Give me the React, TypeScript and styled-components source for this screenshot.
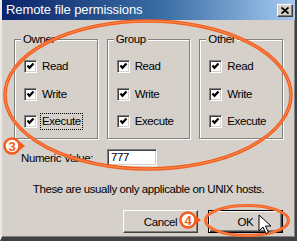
import styled, { createGlobalStyle } from 'styled-components';

const GlobalStyle = createGlobalStyle`
  html, body {
    margin: 0;
    padding: 0;
    background: #d6d0cb;
  }
  * {
    box-sizing: border-box;
  }
`;

const ORANGE = '#f35d1c';

const Window = styled.div`
  position: relative;
  width: 297px;
  height: 241px;
  display: flex;
  flex-direction: column;
  background: #d6d0cb;
  border-style: solid;
  border-width: 0 2px 4px 2px;
  border-color: #d6d0cb #404040 #404040 #ece9e4;
  box-shadow: inset -1px -1px 0 #808080;
  font-family: 'Liberation Sans', Arial, sans-serif;
  font-size: 11.5px;
  letter-spacing: -0.4px;
  color: #000;
`;

const TitleBar = styled.div`
  height: 20px;
  flex: none;
  display: flex;
  align-items: center;
  justify-content: space-between;
  padding: 0 2px 0 4px;
  background: linear-gradient(90deg, #0a246a 0%, #3a6ea5 55%, #a6caf0 100%);
`;

const Title = styled.span`
  color: #fff;
  font-size: 13px;
  letter-spacing: -0.1px;
  line-height: 20px;
`;

const CloseButton = styled.div`
  width: 16px;
  height: 13px;
  margin-top: 1px;
  display: flex;
  align-items: center;
  justify-content: center;
  background: #d6d0cb;
  border: 1px solid;
  border-color: #fff #404040 #404040 #fff;
  box-shadow: inset -1px -1px 0 #808080;
`;

const Body = styled.div`
  flex: 1;
  display: flex;
  flex-direction: column;
  padding: 19px 12px 0 12px;
`;

const GroupsRow = styled.div`
  display: flex;
  gap: 9px;
`;

const Frame = styled.div`
  position: relative;
  width: 84px;
  height: 100px;
  border: 1px solid #808080;
  box-shadow: inset 1px 1px 0 #fff, 1px 1px 0 #fff;
  padding: 20px 0 0 9px;
  display: flex;
  flex-direction: column;
  gap: 14.5px;
`;

const Legend = styled.span`
  position: absolute;
  top: -8px;
  left: 6px;
  padding: 0 2px;
  background: #d6d0cb;
  line-height: 14px;
`;

const CheckRow = styled.div`
  display: flex;
  align-items: center;
  height: 13px;
  gap: 3px;
`;

const Box = styled.span`
  width: 13px;
  height: 13px;
  flex: none;
  display: block;
  background: #fff;
  border: 1px solid;
  border-color: #808080 #fff #fff #808080;
  box-shadow: inset 1px 1px 0 #404040, inset -1px -1px 0 #d6d0cb;
`;

const CheckLabel = styled.span<{ $focused?: boolean }>`
  border: 1px dotted ${({ $focused }) => ($focused ? '#000' : 'transparent')};
  padding: 1px 1px 2px 1px;
  line-height: 12px;
`;

const ValueRow = styled.div`
  display: flex;
  align-items: center;
  margin-top: 10px;
  padding-left: 7px;
`;

const ValueLabel = styled.span`
  width: 86px;
`;

const ValueInput = styled.div`
  width: 50px;
  height: 17px;
  background: #fff;
  border: 1px solid;
  border-color: #808080 #fff #fff #808080;
  box-shadow: inset 1px 1px 0 #404040, inset -1px -1px 0 #d6d0cb;
  padding: 0 3px;
  line-height: 15px;
`;

const Info = styled.div`
  margin-top: 16px;
  text-align: center;
  line-height: 14px;
`;

const ButtonRow = styled.div`
  display: flex;
  justify-content: flex-end;
  gap: 10px;
  margin-top: 14px;
`;

const Button = styled.div<{ $default?: boolean }>`
  width: 75px;
  height: 23px;
  display: flex;
  align-items: center;
  justify-content: center;
  background: #d6d0cb;
  border: 1px solid #000;
  border-color: ${({ $default }) => ($default ? '#000' : '#fff #404040 #404040 #fff')};
  box-shadow: ${({ $default }) =>
    $default
      ? 'inset 1px 1px 0 #fff, inset -1px -1px 0 #404040, inset -2px -2px 0 #808080'
      : 'inset -1px -1px 0 #808080'};
`;

const Overlay = styled.svg`
  position: absolute;
  left: -2px;
  top: 0;
  pointer-events: none;
  overflow: visible;
`;

function Check({ label, focused }: { label: string; focused?: boolean }) {
  return (
    <CheckRow>
      <Box>
        <svg width="11" height="11" viewBox="0 0 11 11">
          <path d="M2.5 4.5 L4.5 6.8 L8.5 2.5" stroke="#000" strokeWidth="2.2" fill="none" />
        </svg>
      </Box>
      <CheckLabel $focused={focused}>{label}</CheckLabel>
    </CheckRow>
  );
}

function Group({ name, focusExecute }: { name: string; focusExecute?: boolean }) {
  return (
    <Frame>
      <Legend>{name}</Legend>
      <Check label="Read" />
      <Check label="Write" />
      <Check label="Execute" focused={focusExecute} />
    </Frame>
  );
}

function Badge({ x, y, n }: { x: number; y: number; n: string }) {
  return (
    <g>
      <polygon points={`${x + 8},${y - 4} ${x + 13},${y} ${x + 8},${y + 4}`} fill={ORANGE} />
      <circle cx={x} cy={y} r="7.5" fill="#fff" stroke={ORANGE} strokeWidth="2.5" />
      <text
        x={x}
        y={y + 4.5}
        textAnchor="middle"
        fontFamily="'Liberation Sans', Arial, sans-serif"
        fontWeight="bold"
        fontSize="13"
        fill={ORANGE}
      >
        {n}
      </text>
    </g>
  );
}

export default function App() {
  return (
    <>
      <GlobalStyle />
      <Window>
        <TitleBar>
          <Title>Remote file permissions</Title>
          <CloseButton>
            <svg width="8" height="7" viewBox="0 0 8 7">
              <path d="M0.5 0.5 L7.5 6.5 M7.5 0.5 L0.5 6.5" stroke="#000" strokeWidth="1.8" />
            </svg>
          </CloseButton>
        </TitleBar>
        <Body>
          <GroupsRow>
            <Group name="Owner" focusExecute />
            <Group name="Group" />
            <Group name="Other" />
          </GroupsRow>
          <ValueRow>
            <ValueLabel>Numeric Value:</ValueLabel>
            <ValueInput>777</ValueInput>
          </ValueRow>
          <Info>These are usually only applicable on UNIX hosts.</Info>
          <ButtonRow>
            <Button>Cancel</Button>
            <Button $default>OK</Button>
          </ButtonRow>
        </Body>
        <Overlay width="297" height="241" viewBox="0 0 297 241">
          <ellipse cx="148" cy="95" rx="143" ry="74" fill="none" stroke={ORANGE} strokeWidth="3.5" />
          <ellipse cx="148" cy="95" rx="143" ry="74" fill="none" stroke="#ff9a66" strokeWidth="0.8" />
          <ellipse cx="247" cy="220.5" rx="41.5" ry="15" fill="none" stroke={ORANGE} strokeWidth="3" />
          <ellipse cx="247" cy="220.5" rx="41.5" ry="15" fill="none" stroke="#ff9a66" strokeWidth="0.7" />
          <Badge x={12} y={146} n="3" />
          <Badge x={188} y={220} n="4" />
          <path
            d="M259 215 L259 231 L263 227 L266 233.5 L268.5 232.5 L265.5 226 L271 226 Z"
            fill="#fff"
            stroke="#000"
            strokeWidth="1"
            strokeLinejoin="round"
          />
        </Overlay>
      </Window>
    </>
  );
}
